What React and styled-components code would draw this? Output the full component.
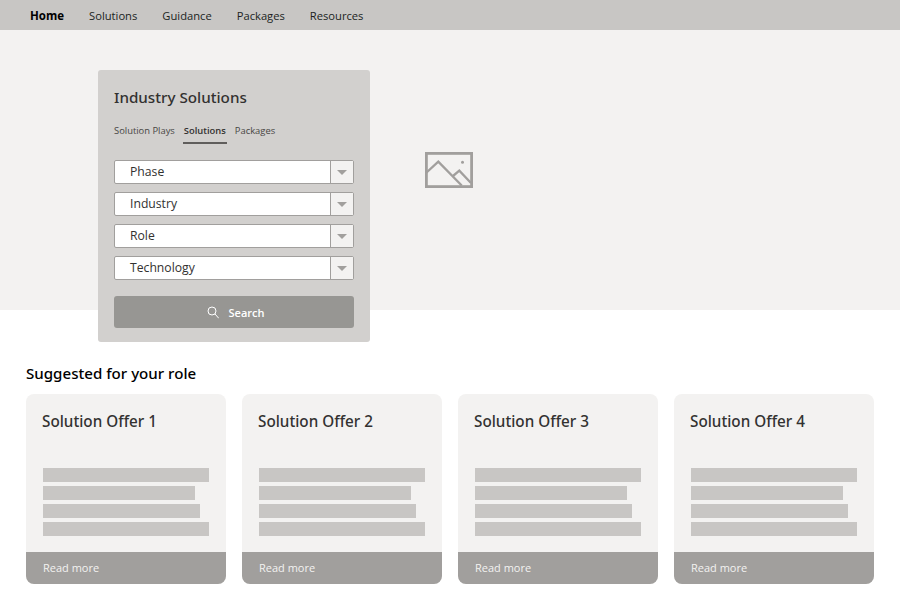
import styled, { createGlobalStyle } from "styled-components";

const GlobalStyle = createGlobalStyle`
  body {
    margin: 0;
    background: #fff;
    font-family: "Open Sans", "Noto Sans", sans-serif;
  }
`;

const Page = styled.div`
  width: 900px;
  height: 600px;
  overflow: hidden;
`;

const Nav = styled.nav`
  display: flex;
  align-items: center;
  column-gap: 25px;
  height: 30px;
  padding-left: 30px;
  background-color: #c8c6c4;
`;

const NavLink = styled.a`
  color: ${(p) => (p.$active ? "#000" : "#201f1e")};
  font-size: ${(p) => (p.$active ? "11.5px" : "11.2px")};
  font-weight: ${(p) => (p.$active ? 700 : 400)};
`;

const Hero = styled.section`
  display: flex;
  column-gap: 55px;
  box-sizing: border-box;
  height: 280px;
  padding: 40px 0 0 98px;
  background-color: #f3f2f1;
`;

const Panel = styled.div`
  display: flex;
  flex-direction: column;
  flex: none;
  box-sizing: border-box;
  width: 272px;
  height: 272px;
  padding: 16px 16px 14px;
  background-color: #d2d0ce;
  border-radius: 3px;
`;

const PanelTitle = styled.h2`
  margin: 0;
  color: #323130;
  font-family: "Noto Sans", sans-serif;
  font-size: 15.2px;
  font-weight: 500;
  line-height: 22px;
`;

const Tabs = styled.div`
  display: flex;
  column-gap: 8px;
  margin: 15px 0 16px;
`;

const Tab = styled.span`
  box-sizing: border-box;
  height: 21px;
  padding: 0 ${(p) => (p.$active ? "1px" : "0")};
  border-bottom: ${(p) => (p.$active ? "2px solid #605e5c" : "none")};
  color: ${(p) => (p.$active ? "#323130" : "#484644")};
  font-size: 9.4px;
  font-weight: ${(p) => (p.$active ? 600 : 400)};
  line-height: 16px;
`;

const Selects = styled.div`
  display: flex;
  flex-direction: column;
  row-gap: 8px;
`;

const Select = styled.div`
  display: flex;
  box-sizing: border-box;
  height: 24px;
  background-color: #fff;
  border: 1px solid #a19f9d;
  border-radius: 2px;
`;

const SelectLabel = styled.span`
  flex: 1;
  padding-left: 15px;
  color: #323130;
  font-size: 12.2px;
  line-height: 22px;
`;

const SelectArrow = styled.span`
  display: flex;
  align-items: center;
  justify-content: center;
  width: 22px;
  background-color: #f3f2f1;
  border-left: 1px solid #a19f9d;

  &::after {
    content: "";
    margin-top: 1px;
    border-top: 5px solid #a19f9d;
    border-left: 5.5px solid transparent;
    border-right: 5.5px solid transparent;
  }
`;

const SearchButton = styled.button`
  display: flex;
  align-items: center;
  justify-content: center;
  column-gap: 10px;
  height: 32px;
  margin-top: 16px;
  padding: 0 0 0 3px;
  background-color: #979693;
  border: 0;
  border-radius: 3px;
  color: #fff;
  font-family: inherit;
  font-size: 11px;
  font-weight: 600;
`;

const HeroImage = styled.svg`
  flex: none;
  align-self: center;
  width: 48px;
  height: 36px;
  margin-top: -40px;
`;

const Suggested = styled.section`
  padding: 51px 26px 0;
`;

const SectionTitle = styled.h3`
  margin: 0 0 9px;
  color: #000;
  font-family: "Noto Sans", sans-serif;
  font-size: 15.1px;
  font-weight: 500;
  line-height: 24px;
`;

const Cards = styled.div`
  display: grid;
  grid-template-columns: repeat(4, 200px);
  column-gap: 16px;
`;

const Card = styled.article`
  display: flex;
  flex-direction: column;
  height: 190px;
  overflow: hidden;
  background-color: #f3f2f1;
  border-radius: 8px;
`;

const CardTitle = styled.h4`
  margin: 15px 16px 0;
  color: #323130;
  font-family: "Noto Sans", sans-serif;
  font-size: 15.25px;
  font-weight: 500;
  line-height: 24px;
`;

const Lines = styled.div`
  display: flex;
  flex-direction: column;
  row-gap: 4px;
  margin: 35px 0 0 17px;
`;

const Line = styled.div`
  width: ${(p) => p.$width}px;
  height: 14px;
  background-color: #c8c6c4;
`;

const CardFooter = styled.div`
  height: 32px;
  margin-top: auto;
  padding-left: 17px;
  background-color: #a19f9d;
  color: #f3f2f1;
  font-size: 11px;
  line-height: 32px;
`;

const navItems = ["Home", "Solutions", "Guidance", "Packages", "Resources"];
const filters = ["Phase", "Industry", "Role", "Technology"];
const offers = [1, 2, 3, 4];
const lineWidths = [166, 152, 157, 166];

export default function App() {
  return (
    <Page>
      <GlobalStyle />
      <Nav>
        {navItems.map((item, i) => (
          <NavLink key={item} $active={i === 0}>
            {item}
          </NavLink>
        ))}
      </Nav>
      <Hero>
        <Panel>
          <PanelTitle>Industry Solutions</PanelTitle>
          <Tabs>
            <Tab>Solution Plays</Tab>
            <Tab $active>Solutions</Tab>
            <Tab>Packages</Tab>
          </Tabs>
          <Selects>
            {filters.map((filter) => (
              <Select key={filter}>
                <SelectLabel>{filter}</SelectLabel>
                <SelectArrow />
              </Select>
            ))}
          </Selects>
          <SearchButton>
            <svg width="12" height="13" viewBox="0 0 12 13" fill="none" stroke="#fff" strokeWidth="1">
              <circle cx="5" cy="5" r="4" />
              <path d="M7.800 7.800l4 4.500" />
            </svg>
            Search
          </SearchButton>
        </Panel>
        <HeroImage viewBox="0 0 48 36" fill="none" stroke="#a19f9d" strokeWidth="2.300">
          <rect x="1.400" y="1.400" width="45.200" height="33.200" strokeWidth="2.800" />
          <path d="M1 21L13.300 9.700L36.700 33.500M28 24L34.300 18.700L46 31" />
          <circle cx="37.500" cy="10.300" r="1.500" fill="#a19f9d" stroke="none" />
        </HeroImage>
      </Hero>
      <Suggested>
        <SectionTitle>Suggested for your role</SectionTitle>
        <Cards>
          {offers.map((n) => (
            <Card key={n}>
              <CardTitle>Solution Offer {n}</CardTitle>
              <Lines>
                {lineWidths.map((width, i) => (
                  <Line key={i} $width={width} />
                ))}
              </Lines>
              <CardFooter>Read more</CardFooter>
            </Card>
          ))}
        </Cards>
      </Suggested>
    </Page>
  );
}
